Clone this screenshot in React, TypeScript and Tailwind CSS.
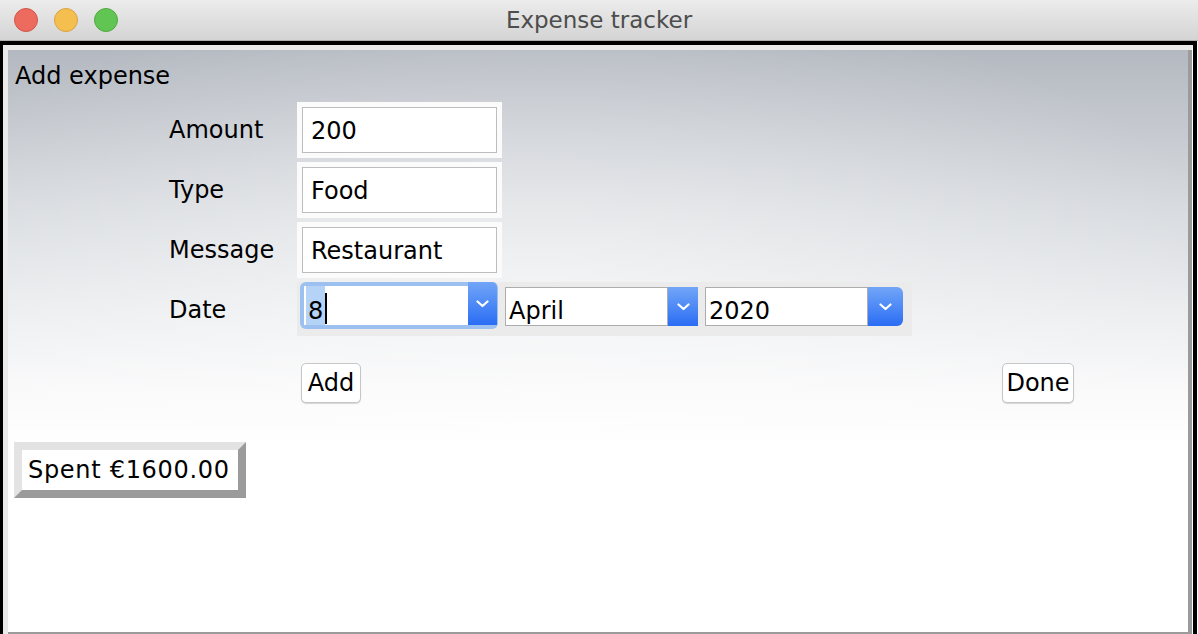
import type { ReactNode } from "react";

function Chevron() {
  return (
    <svg width="13" height="8" viewBox="0 0 13 8" fill="none">
      <path d="M1.5 1.5 L6.5 6 L11.5 1.5" stroke="white" strokeWidth="2.2" strokeLinecap="round" strokeLinejoin="round" />
    </svg>
  );
}

function TextField({ value }: { value: string }) {
  return (
    <div className="w-[205px] h-[56px] p-[5px] bg-[#fbfbfb]">
      <div className="h-full bg-white border border-[#bdbdbd] pl-[8px] flex items-center leading-[28px] pt-[1px]">
        {value}
      </div>
    </div>
  );
}

function Combo({ value, rounded, width, button }: { value: string; rounded?: boolean; width: number; button: number }) {
  return (
    <div className="flex h-[39px]" style={{ width }}>
      <div className="flex-1 bg-white border border-[#adadad] pl-[3px] flex items-end leading-[28px]">
        {value}
      </div>
      <div
        className={
          "h-full flex items-center justify-center bg-gradient-to-b from-[#72a5f7] to-[#2a6cf4] " +
          (rounded ? "rounded-r-[6px]" : "")
        }
        style={{ width: button }}
      >
        <Chevron />
      </div>
    </div>
  );
}

function Row({ label, children }: { label: string; children: ReactNode }) {
  return (
    <>
      <div className="flex items-center leading-[28px]">{label}</div>
      <div>{children}</div>
    </>
  );
}

export default function App() {
  return (
    <div className="w-[1198px] h-[634px] bg-white overflow-hidden text-[24px] text-black font-['DejaVu_Sans',sans-serif]">
      {/* title bar */}
      <div className="relative h-[41px] bg-gradient-to-b from-[#ececec] to-[#d4d4d4] border-b border-[#aeaeae] flex items-center justify-center">
        <div className="absolute left-[14px] top-[8px] flex gap-[16px]">
          <div className="w-[24px] h-[24px] rounded-full bg-[#ed6a5e] border border-[#d1564b]" />
          <div className="w-[24px] h-[24px] rounded-full bg-[#f5bf4f] border border-[#d9a341]" />
          <div className="w-[24px] h-[24px] rounded-full bg-[#61c554] border border-[#52a842]" />
        </div>
        <span className="text-[23px] leading-[28px] text-[#4d4d4d]">Expense tracker</span>
      </div>

      {/* window frame */}
      <div className="h-[593px] mr-px border-l-[3px] border-t-[4px] border-r-[4px] border-black">
        <div className="h-full border-l-[5px] border-t-[5px] border-[#eaeaea] border-r border-r-white">
          <div className="h-full border-r-[4px] border-b-[2px] border-[#9b9b9b] bg-[radial-gradient(ellipse_60%_50%_at_45%_40%,rgba(255,255,255,0.5),rgba(255,255,255,0)_100%),linear-gradient(to_bottom,#b4b9c1,#d8dbdf_28%,#eceef0_46%,#f9f9fa_58%,#ffffff_68%)]">
            <div className="pl-[7px] pt-[12px] leading-[28px]">Add expense</div>

            <div className="mt-[12px] ml-[161px] grid grid-cols-[128px_auto] auto-rows-[56px] gap-y-[4px]">
              <Row label="Amount">
                <TextField value="200" />
              </Row>
              <Row label="Type">
                <TextField value="Food" />
              </Row>
              <Row label="Message">
                <TextField value="Restaurant" />
              </Row>
              <Row label="Date">
                <div className="w-[615px] h-[54px] bg-[#ebebeb] pl-[3px] flex items-start gap-[7px]">
                  {/* focused day combo */}
                  <div className="relative w-[198px] h-[47px] rounded-[6px] bg-[#9cc0ef]">
                    <div className="absolute left-[4px] top-[4px] w-[164px] h-[39px] bg-white flex items-end pl-[2px]">
                      <span className="h-full flex items-end bg-[#b5d3f7] px-[2px] leading-[28px]">8</span>
                      <span className="w-[2px] h-[31px] bg-black mb-[1px]" />
                    </div>
                    <div className="absolute right-[1px] top-0 w-[29px] h-[43px] rounded-tr-[5px] flex items-center justify-center bg-gradient-to-b from-[#72a5f7] to-[#2a6cf4]">
                      <Chevron />
                    </div>
                  </div>
                  <div className="mt-[5px]">
                    <Combo value="April" width={193} button={30} />
                  </div>
                  <div className="mt-[5px]">
                    <Combo value="2020" width={198} button={35} rounded />
                  </div>
                </div>
              </Row>
            </div>

            <div className="mt-[25px] ml-[293px] flex">
              <button className="w-[60px] h-[40px] bg-white border border-[#c6c6c6] rounded-[5px] shadow-[0_1px_1px_rgba(0,0,0,0.15)] leading-[28px] flex items-center justify-center">
                Add
              </button>
              <button className="ml-[641px] w-[72px] h-[40px] bg-white border border-[#c6c6c6] rounded-[5px] shadow-[0_1px_1px_rgba(0,0,0,0.15)] leading-[28px] flex items-center justify-center">
                Done
              </button>
            </div>

            <div className="mt-[39px] ml-[6px] w-[232px] h-[56px] border-[8px] border-l-[#e3e3e3] border-t-[#e3e3e3] border-r-[#9b9b9b] border-b-[#9b9b9b]">
              <div className="h-full bg-white pl-[6px] flex items-center leading-[28px] tracking-[0.7px]">Spent €1600.00</div>
            </div>
          </div>
        </div>
      </div>
    </div>
  );
}
